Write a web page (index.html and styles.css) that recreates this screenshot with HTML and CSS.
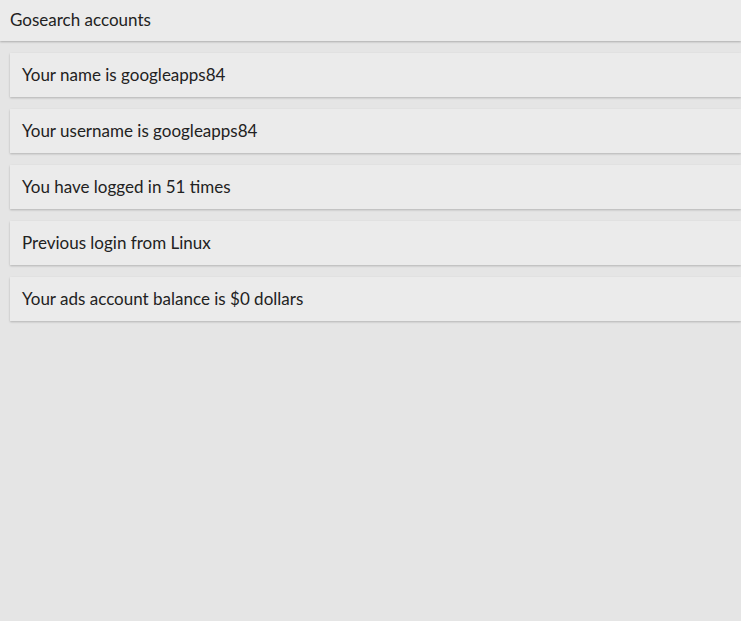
FILE: index.html
```html
<!DOCTYPE html>
<html lang="en">
<head>
    <meta charset="UTF-8">
    <meta name="viewport" content="width=device-width, initial-scale=1.0">
    <title>Gosearch accounts</title>
    <link rel="stylesheet" href="styles.css">
</head>
<body>
    <div class="topbar">Gosearch accounts</div>

    <div class="list">
        <div class="item">Your name is googleapps84</div>
        <div class="item">Your username is googleapps84</div>
        <div class="item">You have logged in 51 times</div>
        <div class="item">Previous login from Linux</div>
        <div class="item">Your ads account balance is $0 dollars</div>
    </div>
</body>
</html>
```

FILE: styles.css
```css
html, body { margin: 0; padding: 0; height: 100%; }
body { background: #e5e5e5; font-family: Lato, "Noto Sans", sans-serif; font-size: 17px; color: #222; }
.topbar { height: 41px; line-height: 39px; padding-left: 10px; background: #ebebeb; box-shadow: 0 1px 2px rgba(0,0,0,0.25); }
.list { display: flex; flex-direction: column; gap: 12px; padding: 12px 0 0 10px; }
.item { height: 44px; line-height: 44px; padding-left: 12px; background: #ebebeb; box-shadow: 0 1px 2px rgba(0,0,0,0.22); }
```
